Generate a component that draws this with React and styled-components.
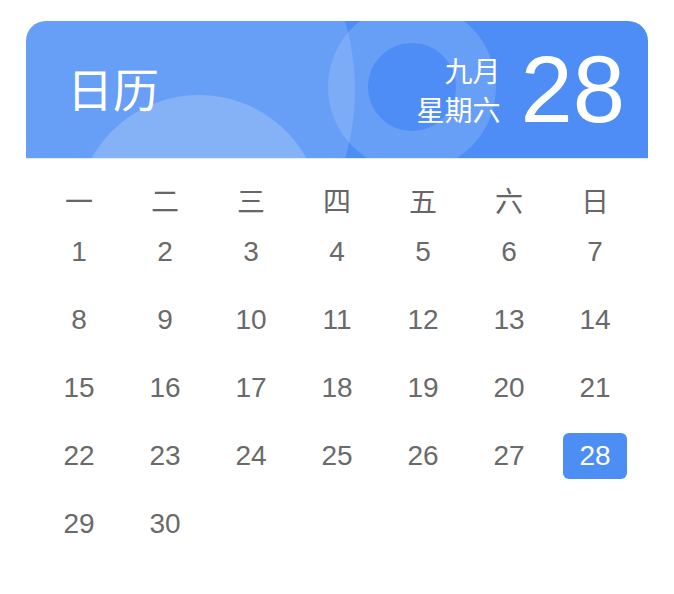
import React from "react";
import styled, { createGlobalStyle } from "styled-components";

const Global = createGlobalStyle`
  html, body { margin: 0; padding: 0; background: #ffffff; }
  body { font-family: "Liberation Sans", "Noto Sans CJK SC", sans-serif; }
`;

const Page = styled.div`
  padding: 21px 0 0 26px;
`;

const Card = styled.div`
  width: 622px;
  background: #ffffff;
  border-radius: 20px 20px 0 0;
  overflow: hidden;
`;

const Header = styled.div`
  position: relative;
  height: 137px;
  background: #4d8df5;
  display: flex;
  align-items: center;
  justify-content: space-between;
  padding: 0 23px 0 41px;
  overflow: hidden;
  border-bottom: 1px solid #dcf0fb;
  box-sizing: content-box;
`;

const Bubble = styled.div`
  position: absolute;
  left: ${(p) => p.$x - p.$r}px;
  top: ${(p) => p.$y - p.$r}px;
  width: ${(p) => p.$r * 2}px;
  height: ${(p) => p.$r * 2}px;
  border-radius: 50%;
  box-sizing: border-box;
  background: ${(p) => (p.$ring ? "transparent" : `rgba(255,255,255,${p.$a})`)};
  border: ${(p) => (p.$ring ? `${p.$ring}px solid rgba(255,255,255,${p.$a})` : "none")};
  pointer-events: none;
`;

const Title = styled.div`
  position: relative;
  font-family: "Noto Sans CJK SC", sans-serif;
  font-size: 46px;
  color: #ffffff;
  line-height: 1;
  margin-top: -6px;
`;

const Today = styled.div`
  position: relative;
  display: flex;
  align-items: center;
  gap: 20px;
`;

const DateText = styled.div`
  font-family: "Noto Sans CJK SC", sans-serif;
  font-size: 28px;
  line-height: 39px;
  color: #ffffff;
  text-align: right;
`;

const BigDay = styled.div`
  font-family: "Liberation Sans", sans-serif;
  font-size: 94px;
  line-height: 1;
  color: #ffffff;
`;

const Body = styled.div`
  padding: 27px 10px 36px;
`;

const Grid = styled.div`
  display: grid;
  grid-template-columns: repeat(7, 86px);
  grid-auto-rows: 68px;
`;

const WeekRow = styled(Grid)`
  grid-auto-rows: 28px;
  margin-bottom: 4px;
`;

const WeekCell = styled.div`
  font-family: "Noto Sans CJK SC", sans-serif;
  font-size: 28px;
  line-height: 28px;
  color: #666666;
  text-align: center;
`;

const DayCell = styled.div`
  display: flex;
  align-items: center;
  justify-content: center;
`;

const Day = styled.span`
  display: inline-block;
  width: 64px;
  height: 46px;
  line-height: 46px;
  text-align: center;
  border-radius: 6px;
  font-family: "Liberation Sans", sans-serif;
  font-size: 28px;
  color: ${(p) => (p.$active ? "#ffffff" : "#6a6a6a")};
  background: ${(p) => (p.$active ? "#4d8ef5" : "transparent")};
`;

const weekdays = ["一", "二", "三", "四", "五", "六", "日"];
const days = Array.from({ length: 30 }, (_, i) => i + 1);

export default function App() {
  return (
    <>
      <Global />
      <Page>
        <Card>
          <Header>
            <Bubble $x={86} $y={69} $r={243} $a={0.15} />
            <Bubble $x={173} $y={197} $r={123} $a={0.2} />
            <Bubble $x={386} $y={66} $r={84} $ring={40} $a={0.15} />
            <Title>日历</Title>
            <Today>
              <DateText>
                九月
                <br />
                星期六
              </DateText>
              <BigDay>28</BigDay>
            </Today>
          </Header>
          <Body>
            <WeekRow>
              {weekdays.map((w) => (
                <WeekCell key={w}>{w}</WeekCell>
              ))}
            </WeekRow>
            <Grid>
              {days.map((d) => (
                <DayCell key={d}>
                  <Day $active={d === 28}>{d}</Day>
                </DayCell>
              ))}
            </Grid>
          </Body>
        </Card>
      </Page>
    </>
  );
}
